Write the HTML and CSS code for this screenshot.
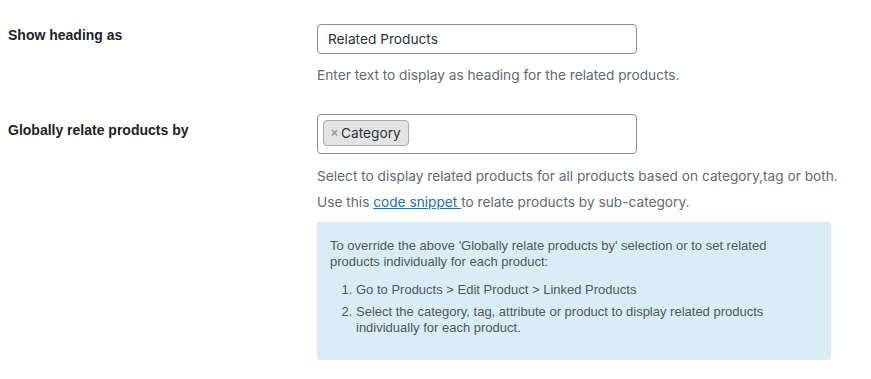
FILE: index.html
```html
<!DOCTYPE html>
<html lang="en">
<head>
<meta charset="utf-8">
<title>Related Products Settings</title>
<link rel="stylesheet" href="styles.css">
</head>
<body>
<div class="form">
  <div class="row row-heading">
    <div class="label">Show heading as</div>
    <div class="field">
      <input class="text-input" type="text" value="Related Products">
      <p class="desc desc-first">Enter text to display as heading for the related products.</p>
    </div>
  </div>
  <div class="row row-relate">
    <div class="label label-relate">Globally relate products by</div>
    <div class="field">
      <div class="multi-select">
        <span class="tag"><span class="tag-remove">×</span>Category</span>
      </div>
      <p class="desc desc-second">Select to display related products for all products based on category,tag or both.</p>
      <p class="desc desc-third">Use this <a class="link" href="#">code snippet </a>to relate products by sub-category.</p>
      <div class="notice">
        <p class="notice-text">To override the above 'Globally relate products by' selection or to set related products individually for each product:</p>
        <ol class="notice-list">
          <li>Go to Products &gt; Edit Product &gt; Linked Products</li>
          <li>Select the category, tag, attribute or product to display related products individually for each product.</li>
        </ol>
      </div>
    </div>
  </div>
</div>
</body>
</html>
```

FILE: styles.css
```css
html, body {
  margin: 0;
  padding: 0;
  background: #ffffff;
}
body {
  font-family: Inter, "Liberation Sans", Arial, sans-serif;
  font-size: 13.7px;
  color: #1d2327;
}
.form {
  display: flex;
  flex-direction: column;
  padding: 24px 0 0 8px;
}
.row {
  display: grid;
  grid-template-columns: 309px 1fr;
}
.row-relate {
  margin-top: 29px;
}
.label {
  font-family: "Liberation Sans", Arial, sans-serif;
  font-size: 14px;
  font-weight: bold;
  line-height: 20px;
  padding-top: 1px;
  color: #1d2327;
}
.label-relate {
  padding-top: 6px;
}
.field {
  display: flex;
  flex-direction: column;
  align-items: flex-start;
}
.text-input {
  box-sizing: border-box;
  width: 320px;
  height: 30px;
  margin: 0;
  padding: 0 10px;
  border: 1px solid #8c8f94;
  border-radius: 4px;
  font-family: inherit;
  font-size: 13.7px;
  color: #2c3338;
  background: #fff;
  outline: none;
}
.desc {
  margin: 0;
  line-height: 20px;
  color: #646970;
  white-space: nowrap;
}
.desc-first {
  margin-top: 11px;
}
.multi-select {
  box-sizing: border-box;
  width: 320px;
  height: 40px;
  border: 1px solid #8c8f94;
  border-radius: 4px;
  padding: 5px 0 0 5px;
  display: flex;
  align-items: flex-start;
}
.tag {
  box-sizing: border-box;
  height: 26px;
  display: inline-flex;
  align-items: center;
  padding: 0 7px 0 7px;
  background: #e4e4e4;
  border: 1px solid #aaaaaa;
  border-radius: 4px;
  color: #2c3338;
}
.tag-remove {
  font-family: "Liberation Sans", Arial, sans-serif;
  color: #999999;
  font-size: 12px;
  font-weight: bold;
  margin-right: 3px;
}
.desc-second {
  margin-top: 12px;
}
.desc-third {
  margin-top: 6px;
}
.link {
  color: #2271b1;
  text-decoration: underline;
}
.notice {
  box-sizing: border-box;
  width: 514px;
  margin-top: 10px;
  padding: 16px 22px 24px 13px;
  background: #d9edf6;
  border-radius: 3px;
  font-family: "Liberation Sans", Arial, sans-serif;
  font-size: 13px;
  line-height: 16px;
  color: #50575e;
}
.notice-text {
  margin: 0;
}
.notice-list {
  margin: 12px 0 0 0;
  padding: 0 0 0 26px;
}
.notice-list li + li {
  margin-top: 6px;
}
```
